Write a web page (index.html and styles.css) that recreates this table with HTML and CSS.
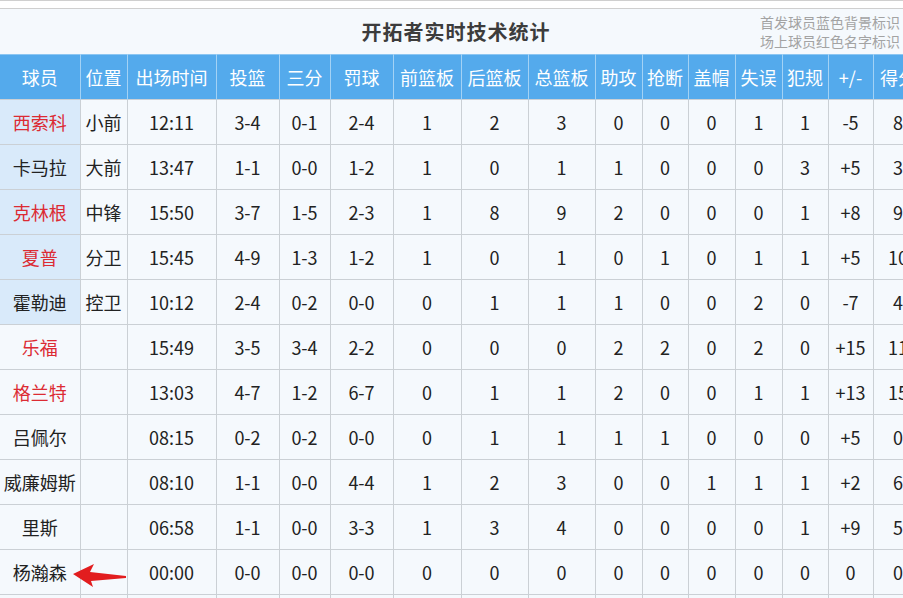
FILE: index.html
```html
<!DOCTYPE html>
<html lang="zh">
<head>
<meta charset="utf-8">
<title>开拓者实时技术统计</title>
<link rel="stylesheet" href="styles.css">
</head>
<body>
<div class="topbar"></div>
<div class="wrap">
  <div class="titlebar">
    <div></div>
    <h1 class="title">开拓者实时技术统计</h1>
    <div class="legend">首发球员蓝色背景标识<br>场上球员红色名字标识</div>
  </div>
  <table class="stats">
    <colgroup>
      <col style="width:80px"><col style="width:47px"><col style="width:89px"><col style="width:63px"><col style="width:51px"><col style="width:63px"><col style="width:68px"><col style="width:67px"><col style="width:67px"><col style="width:47px"><col style="width:46px"><col style="width:47px"><col style="width:47px"><col style="width:46px"><col style="width:45px"><col style="width:50px">
    </colgroup>
    <thead>
      <tr><th>球员</th><th>位置</th><th>出场时间</th><th>投篮</th><th>三分</th><th>罚球</th><th>前篮板</th><th>后篮板</th><th>总篮板</th><th>助攻</th><th>抢断</th><th>盖帽</th><th>失误</th><th>犯规</th><th>+/-</th><th>得分</th></tr>
    </thead>
    <tbody>
      <tr><td class="name starter oncourt">西索科</td><td>小前</td><td>12:11</td><td>3-4</td><td>0-1</td><td>2-4</td><td>1</td><td>2</td><td>3</td><td>0</td><td>0</td><td>0</td><td>1</td><td>1</td><td>-5</td><td>8</td></tr>
      <tr><td class="name starter">卡马拉</td><td>大前</td><td>13:47</td><td>1-1</td><td>0-0</td><td>1-2</td><td>1</td><td>0</td><td>1</td><td>1</td><td>0</td><td>0</td><td>0</td><td>3</td><td>+5</td><td>3</td></tr>
      <tr><td class="name starter oncourt">克林根</td><td>中锋</td><td>15:50</td><td>3-7</td><td>1-5</td><td>2-3</td><td>1</td><td>8</td><td>9</td><td>2</td><td>0</td><td>0</td><td>0</td><td>1</td><td>+8</td><td>9</td></tr>
      <tr><td class="name starter oncourt">夏普</td><td>分卫</td><td>15:45</td><td>4-9</td><td>1-3</td><td>1-2</td><td>1</td><td>0</td><td>1</td><td>0</td><td>1</td><td>0</td><td>1</td><td>1</td><td>+5</td><td>10</td></tr>
      <tr><td class="name starter">霍勒迪</td><td>控卫</td><td>10:12</td><td>2-4</td><td>0-2</td><td>0-0</td><td>0</td><td>1</td><td>1</td><td>1</td><td>0</td><td>0</td><td>2</td><td>0</td><td>-7</td><td>4</td></tr>
      <tr><td class="name oncourt">乐福</td><td></td><td>15:49</td><td>3-5</td><td>3-4</td><td>2-2</td><td>0</td><td>0</td><td>0</td><td>2</td><td>2</td><td>0</td><td>2</td><td>0</td><td>+15</td><td>11</td></tr>
      <tr><td class="name oncourt">格兰特</td><td></td><td>13:03</td><td>4-7</td><td>1-2</td><td>6-7</td><td>0</td><td>1</td><td>1</td><td>2</td><td>0</td><td>0</td><td>1</td><td>1</td><td>+13</td><td>15</td></tr>
      <tr><td class="name">吕佩尔</td><td></td><td>08:15</td><td>0-2</td><td>0-2</td><td>0-0</td><td>0</td><td>1</td><td>1</td><td>1</td><td>1</td><td>0</td><td>0</td><td>0</td><td>+5</td><td>0</td></tr>
      <tr><td class="name">威廉姆斯</td><td></td><td>08:10</td><td>1-1</td><td>0-0</td><td>4-4</td><td>1</td><td>2</td><td>3</td><td>0</td><td>0</td><td>1</td><td>1</td><td>1</td><td>+2</td><td>6</td></tr>
      <tr><td class="name">里斯</td><td></td><td>06:58</td><td>1-1</td><td>0-0</td><td>3-3</td><td>1</td><td>3</td><td>4</td><td>0</td><td>0</td><td>0</td><td>0</td><td>1</td><td>+9</td><td>5</td></tr>
      <tr><td class="name">杨瀚森</td><td></td><td>00:00</td><td>0-0</td><td>0-0</td><td>0-0</td><td>0</td><td>0</td><td>0</td><td>0</td><td>0</td><td>0</td><td>0</td><td>0</td><td>0</td><td>0</td></tr>
      <tr><td class="name"></td><td></td><td></td><td></td><td></td><td></td><td></td><td></td><td></td><td></td><td></td><td></td><td></td><td></td><td></td><td></td></tr>
    </tbody>
  </table>
  <svg class="arrow" width="60" height="30" viewBox="0 0 60 30" aria-hidden="true">
    <polygon points="1,13 22,3 18,11 54,15 54,17 19,20 21,26" fill="#e21d1f"/>
  </svg>
</div>
</body>
</html>
```

FILE: styles.css
```css
html, body {
  margin: 0;
  padding: 0;
  background: #ffffff;
  overflow: hidden;
}
body {
  font-family: "Microsoft YaHei", "Noto Sans CJK SC", "Noto Sans", sans-serif;
  width: 903px;
  height: 598px;
}
.topbar {
  height: 7px;
  border-top: 1px solid #cfcfcf;
  background: #ffffff;
}
.wrap {
  position: relative;
  width: 923px;
  border-top: 1px solid #cfcfcf;
  background: #f5f9fd;
}
.titlebar {
  display: grid;
  grid-template-columns: 1fr auto 1fr;
  align-items: center;
  height: 45px;
  padding-right: 11px;
  box-sizing: border-box;
  background: #f5f9fd;
}
.title {
  margin: 0;
  font-size: 20px;
  font-weight: bold;
  color: #3c3c3c;
  letter-spacing: 1px;
  line-height: 24px;
}
.legend {
  justify-self: end;
  margin-right: 12px;
  font-size: 14px;
  line-height: 19px;
  color: #a3a3a3;
  text-align: right;
}
.stats {
  border-collapse: collapse;
  table-layout: fixed;
  width: 923px;
}
.stats th {
  height: 44px;
  padding: 0;
  background: #54aaec;
  color: #ffffff;
  font-weight: normal;
  font-size: 18px;
  text-align: center;
  border-left: 1px solid #a3d2f5;
  border-right: 1px solid #a3d2f5;
  border-top: 1px solid #8cc6f2;
  white-space: nowrap;
  overflow: hidden;
}
.stats th:first-child {
  border-left: none;
}
.stats td {
  height: 44px;
  padding: 0;
  border: 1px solid #cbd0d5;
  background: #f5f9fd;
  color: #222222;
  font-size: 18px;
  text-align: center;
  white-space: nowrap;
  overflow: hidden;
}
.stats td:first-child {
  border-left: none;
}
.stats td.starter {
  background: #d9eafa;
}
.stats td.oncourt {
  color: #dc2b33;
}
.arrow {
  position: absolute;
  left: 72px;
  top: 552px;
}
```
